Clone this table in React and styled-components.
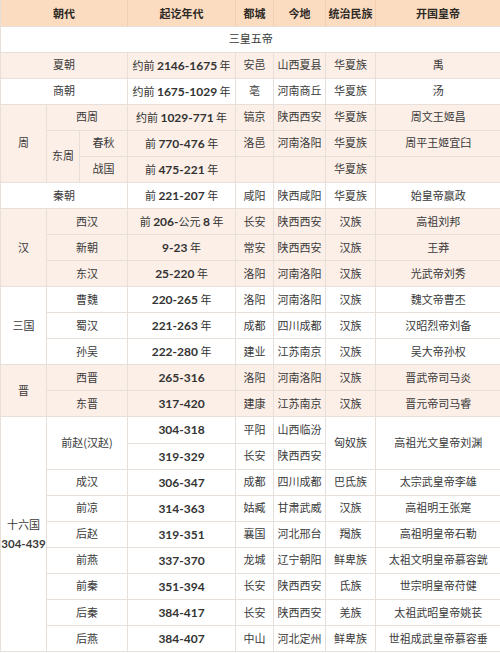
import styled, { createGlobalStyle } from 'styled-components';

const Global = createGlobalStyle`
  html, body {
    margin: 0;
    padding: 0;
    background: #ffffff;
  }
  body {
    font-family: "Noto Sans CJK SC", "Noto Sans", sans-serif;
  }
`;

const Table = styled.table`
  width: 500px;
  height: 652px;
  border-collapse: collapse;
  table-layout: fixed;
  font-size: 11px;
  color: #3a3a3a;
  border-bottom: 1px solid #e4ddd8;
  border-left: 1px solid #e4ddd8;
`;

const Row = styled.tr`
  height: 26px;
  background: ${p => (p.$shade ? '#fcefe7' : '#ffffff')};
`;

const HeadRow = styled.tr`
  height: 26px;
  background: #fcdcc0;
`;

const Head = styled.th`
  font-weight: 700;
  color: #2e2a26;
  text-align: center;
  padding: 0;
  border-right: 1px solid #f3cfb0;
`;

const Cell = styled.td`
  text-align: center;
  padding: 0;
  line-height: 1.25;
  white-space: nowrap;
  border: 1px solid #e6dfda;
  &:last-child {
    border-right: none;
  }
`;

const Year = styled(Cell)`
  font-family: "Lato", "Noto Sans CJK SC", sans-serif;
  font-size: 12px;
  font-weight: 700;
  color: #333;
  span {
    font-family: "Noto Sans CJK SC", sans-serif;
    font-weight: 400;
    font-size: 11px;
  }
`;

const Group = styled(Cell)`
  line-height: 1.7;
  overflow: visible;
`;

const Num = styled.span`
  font-family: "Lato", sans-serif;
  font-size: 11.5px;
  font-weight: 700;
`;

function Y({ pre, num, mid, num2, post }) {
  return (
    <Year>
      {pre && <span>{pre} </span>}
      {num}
      {mid && <span>{mid} </span>}
      {num2}
      {post && <span> {post}</span>}
    </Year>
  );
}

export default function App() {
  return (
    <>
      <Global />
      <Table>
        <colgroup>
          <col style={{ width: 46 }} />
          <col style={{ width: 33 }} />
          <col style={{ width: 48 }} />
          <col style={{ width: 108 }} />
          <col style={{ width: 38 }} />
          <col style={{ width: 52 }} />
          <col style={{ width: 50 }} />
          <col style={{ width: 125 }} />
        </colgroup>
        <thead>
          <HeadRow>
            <Head colSpan={3}>朝代</Head>
            <Head>起讫年代</Head>
            <Head>都城</Head>
            <Head>今地</Head>
            <Head>统治民族</Head>
            <Head>开国皇帝</Head>
          </HeadRow>
        </thead>
        <tbody>
          <Row>
            <Cell colSpan={8}>三皇五帝</Cell>
          </Row>
          <Row $shade>
            <Cell colSpan={3}>夏朝</Cell>
            <Y pre="约前" num="2146-1675" post="年" />
            <Cell>安邑</Cell>
            <Cell>山西夏县</Cell>
            <Cell>华夏族</Cell>
            <Cell>禹</Cell>
          </Row>
          <Row>
            <Cell colSpan={3}>商朝</Cell>
            <Y pre="约前" num="1675-1029" post="年" />
            <Cell>亳</Cell>
            <Cell>河南商丘</Cell>
            <Cell>华夏族</Cell>
            <Cell>汤</Cell>
          </Row>
          <Row $shade>
            <Cell rowSpan={3}>周</Cell>
            <Cell colSpan={2}>西周</Cell>
            <Y pre="约前" num="1029-771" post="年" />
            <Cell>镐京</Cell>
            <Cell>陕西西安</Cell>
            <Cell>华夏族</Cell>
            <Cell>周文王姬昌</Cell>
          </Row>
          <Row $shade>
            <Cell rowSpan={2}>东周</Cell>
            <Cell>春秋</Cell>
            <Y pre="前" num="770-476" post="年" />
            <Cell>洛邑</Cell>
            <Cell>河南洛阳</Cell>
            <Cell>华夏族</Cell>
            <Cell>周平王姬宜臼</Cell>
          </Row>
          <Row $shade>
            <Cell>战国</Cell>
            <Y pre="前" num="475-221" post="年" />
            <Cell />
            <Cell />
            <Cell>华夏族</Cell>
            <Cell />
          </Row>
          <Row>
            <Cell colSpan={3}>秦朝</Cell>
            <Y pre="前" num="221-207" post="年" />
            <Cell>咸阳</Cell>
            <Cell>陕西咸阳</Cell>
            <Cell>华夏族</Cell>
            <Cell>始皇帝嬴政</Cell>
          </Row>
          <Row $shade>
            <Cell rowSpan={3}>汉</Cell>
            <Cell colSpan={2}>西汉</Cell>
            <Y pre="前" num="206-" mid="公元" num2="8" post="年" />
            <Cell>长安</Cell>
            <Cell>陕西西安</Cell>
            <Cell>汉族</Cell>
            <Cell>高祖刘邦</Cell>
          </Row>
          <Row $shade>
            <Cell colSpan={2}>新朝</Cell>
            <Y num="9-23" post="年" />
            <Cell>常安</Cell>
            <Cell>陕西西安</Cell>
            <Cell>汉族</Cell>
            <Cell>王莽</Cell>
          </Row>
          <Row $shade>
            <Cell colSpan={2}>东汉</Cell>
            <Y num="25-220" post="年" />
            <Cell>洛阳</Cell>
            <Cell>河南洛阳</Cell>
            <Cell>汉族</Cell>
            <Cell>光武帝刘秀</Cell>
          </Row>
          <Row>
            <Cell rowSpan={3}>三国</Cell>
            <Cell colSpan={2}>曹魏</Cell>
            <Y num="220-265" post="年" />
            <Cell>洛阳</Cell>
            <Cell>河南洛阳</Cell>
            <Cell>汉族</Cell>
            <Cell>魏文帝曹丕</Cell>
          </Row>
          <Row>
            <Cell colSpan={2}>蜀汉</Cell>
            <Y num="221-263" post="年" />
            <Cell>成都</Cell>
            <Cell>四川成都</Cell>
            <Cell>汉族</Cell>
            <Cell>汉昭烈帝刘备</Cell>
          </Row>
          <Row>
            <Cell colSpan={2}>孙吴</Cell>
            <Y num="222-280" post="年" />
            <Cell>建业</Cell>
            <Cell>江苏南京</Cell>
            <Cell>汉族</Cell>
            <Cell>吴大帝孙权</Cell>
          </Row>
          <Row $shade>
            <Cell rowSpan={2}>晋</Cell>
            <Cell colSpan={2}>西晋</Cell>
            <Y num="265-316" />
            <Cell>洛阳</Cell>
            <Cell>河南洛阳</Cell>
            <Cell>汉族</Cell>
            <Cell>晋武帝司马炎</Cell>
          </Row>
          <Row $shade>
            <Cell colSpan={2}>东晋</Cell>
            <Y num="317-420" />
            <Cell>建康</Cell>
            <Cell>江苏南京</Cell>
            <Cell>汉族</Cell>
            <Cell>晋元帝司马睿</Cell>
          </Row>
          <Row>
            <Group rowSpan={9}>
              十六国
              <br />
              <Num>304-439</Num>
            </Group>
            <Cell rowSpan={2} colSpan={2}>前赵(汉赵)</Cell>
            <Y num="304-318" />
            <Cell>平阳</Cell>
            <Cell>山西临汾</Cell>
            <Cell rowSpan={2}>匈奴族</Cell>
            <Cell rowSpan={2}>高祖光文皇帝刘渊</Cell>
          </Row>
          <Row>
            <Y num="319-329" />
            <Cell>长安</Cell>
            <Cell>陕西西安</Cell>
          </Row>
          <Row>
            <Cell colSpan={2}>成汉</Cell>
            <Y num="306-347" />
            <Cell>成都</Cell>
            <Cell>四川成都</Cell>
            <Cell>巴氐族</Cell>
            <Cell>太宗武皇帝李雄</Cell>
          </Row>
          <Row>
            <Cell colSpan={2}>前凉</Cell>
            <Y num="314-363" />
            <Cell>姑臧</Cell>
            <Cell>甘肃武威</Cell>
            <Cell>汉族</Cell>
            <Cell>高祖明王张寔</Cell>
          </Row>
          <Row>
            <Cell colSpan={2}>后赵</Cell>
            <Y num="319-351" />
            <Cell>襄国</Cell>
            <Cell>河北邢台</Cell>
            <Cell>羯族</Cell>
            <Cell>高祖明皇帝石勒</Cell>
          </Row>
          <Row>
            <Cell colSpan={2}>前燕</Cell>
            <Y num="337-370" />
            <Cell>龙城</Cell>
            <Cell>辽宁朝阳</Cell>
            <Cell>鲜卑族</Cell>
            <Cell>太祖文明皇帝慕容皝</Cell>
          </Row>
          <Row>
            <Cell colSpan={2}>前秦</Cell>
            <Y num="351-394" />
            <Cell>长安</Cell>
            <Cell>陕西西安</Cell>
            <Cell>氐族</Cell>
            <Cell>世宗明皇帝苻健</Cell>
          </Row>
          <Row>
            <Cell colSpan={2}>后秦</Cell>
            <Y num="384-417" />
            <Cell>长安</Cell>
            <Cell>陕西西安</Cell>
            <Cell>羌族</Cell>
            <Cell>太祖武昭皇帝姚苌</Cell>
          </Row>
          <Row>
            <Cell colSpan={2}>后燕</Cell>
            <Y num="384-407" />
            <Cell>中山</Cell>
            <Cell>河北定州</Cell>
            <Cell>鲜卑族</Cell>
            <Cell>世祖成武皇帝慕容垂</Cell>
          </Row>
        </tbody>
      </Table>
    </>
  );
}
